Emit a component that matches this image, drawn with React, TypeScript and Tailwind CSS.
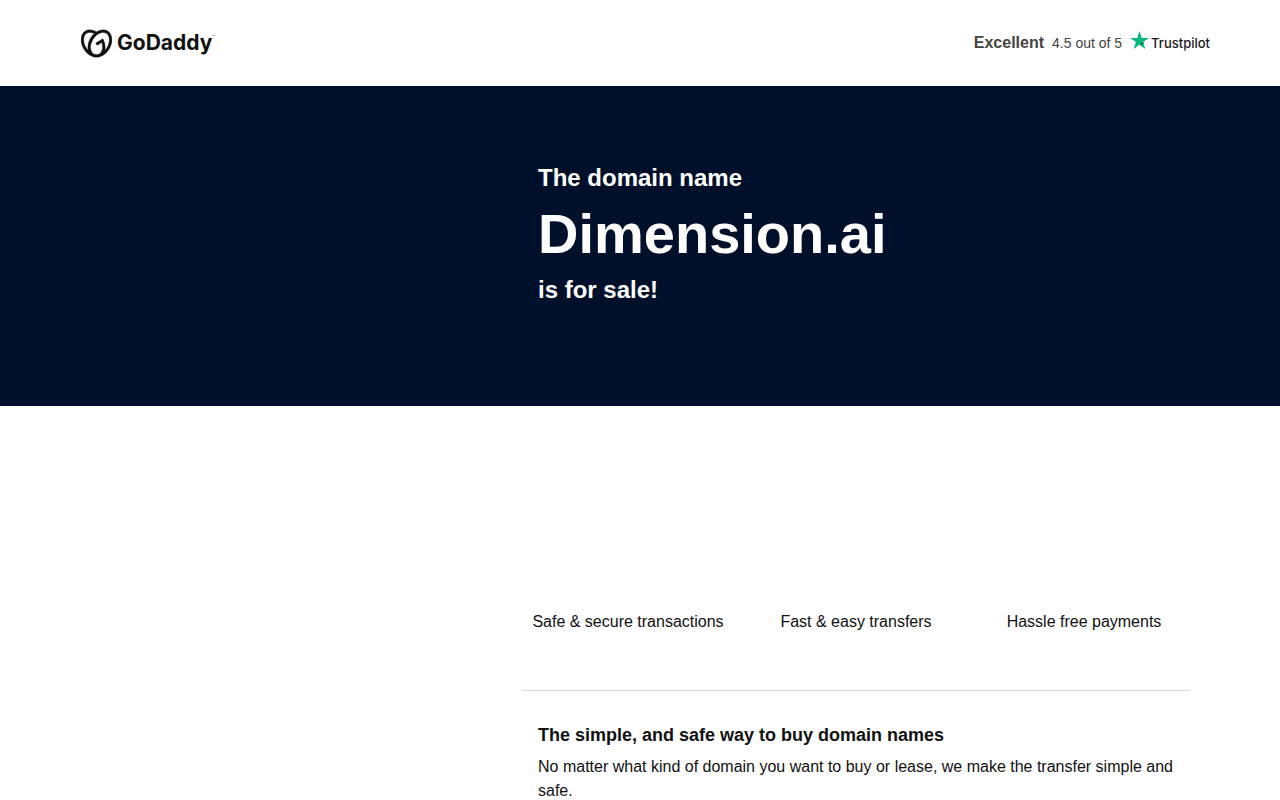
import React from 'react';
import { SiGodaddy } from 'react-icons/si';

const benefits = ['Safe & secure transactions', 'Fast & easy transfers', 'Hassle free payments'];

const Column = ({ children }: { children: React.ReactNode }) => {
  return (
    <div className="mx-auto w-full max-w-[1140px] px-5">
      <div className="ml-auto w-full max-w-[668px]">{children}</div>
    </div>
  );
};

const Logo = () => {
  return (
    <div className="flex items-center gap-[5px] text-[#111111]">
      <SiGodaddy size={31} stroke="currentColor" strokeWidth={0.2} aria-hidden="true" />
      <div className="flex items-start">
        <span className="font-['Inter',sans-serif] text-[21px] leading-7 font-bold">GoDaddy</span>
        <span className="font-['Inter',sans-serif] text-[4px] leading-4">™</span>
      </div>
    </div>
  );
};

const Rating = () => {
  return (
    <div className="flex items-center text-[#444444]">
      <span className="text-base leading-6 font-bold">Excellent</span>
      <span className="ml-2 text-sm leading-6">4.5 out of 5</span>
      <div className="ml-2 flex items-center gap-[2px]">
        <svg viewBox="0 0 24 23" className="mb-[6px] h-[18px] w-[19px]" aria-hidden="true">
          <path fill="#00b67a" d="M24 8.8h-9.2L12 0 9.2 8.8H0l7.4 5.4L4.6 23 12 17.5l7.4 5.5-2.8-8.8z" />
          <path fill="#005128" d="m17.2 16.2-.6-2L12 17.5z" />
        </svg>
        <span className="font-['Inter',sans-serif] text-[13px] leading-6 font-medium text-[#191919]">Trustpilot</span>
      </div>
    </div>
  );
};

const Header = () => {
  return (
    <header className="bg-white">
      <div className="mx-auto flex h-[86px] w-full max-w-[1140px] items-center justify-between pl-[11px]">
        <Logo />
        <Rating />
      </div>
    </header>
  );
};

const Hero = () => {
  return (
    <section className="bg-[#00102a] pt-[76px] pb-[100px] text-white">
      <Column>
        <h1 className="px-4 font-bold">
          <span className="block text-2xl leading-8">The domain name</span>
          <span className="block text-[56px] leading-[80px]">Dimension.ai</span>
          <span className="block text-2xl leading-8">is for sale!</span>
        </h1>
      </Column>
    </section>
  );
};

const Benefits = () => {
  return (
    <section className="pt-[204px]">
      <Column>
        <ul className="-mx-2 grid grid-cols-3 pb-14 text-center">
          {benefits.map((benefit) => (
            <li key={benefit} className="text-base leading-6">{benefit}</li>
          ))}
        </ul>
        <hr className="border-t border-[#d6d6d6]" />
      </Column>
    </section>
  );
};

const About = () => {
  return (
    <section className="py-8">
      <Column>
        <div className="px-4">
          <h2 className="text-lg leading-6 font-bold">The simple, and safe way to buy domain names</h2>
          <p className="mt-2 text-base leading-6">
            No matter what kind of domain you want to buy or lease, we make the transfer simple and safe.
          </p>
        </div>
      </Column>
    </section>
  );
};

const App = () => {
  return (
    <div className="min-h-screen bg-white font-['Liberation_Sans',Arial,sans-serif] text-[#111111]">
      <Header />
      <main>
        <Hero />
        <Benefits />
        <About />
      </main>
    </div>
  );
};

export default App;
